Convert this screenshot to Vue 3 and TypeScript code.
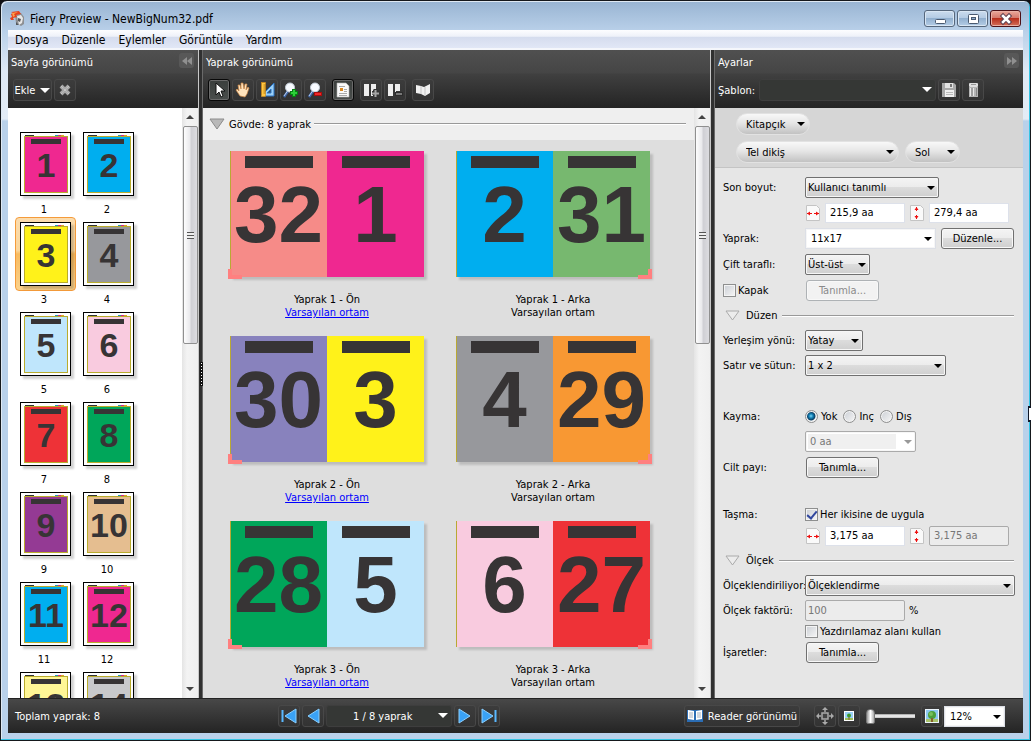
<script setup lang="ts">
import { ref } from 'vue'

interface Page { n: number; color: string }
interface Side { title: string; link: boolean; left: Page; right: Page }

const magenta = '#ef2890'
const cyan = '#00aeef'
const yellow = '#fff21a'
const gray = '#97989c'
const sky = '#bfe6fc'
const pink = '#f9cbdf'
const red = '#ee3237'
const green = '#00a65a'

const menus = ['Dosya', 'Düzenle', 'Eylemler', 'Görüntüle', 'Yardım']
const pages: Page[] = [
  magenta, cyan, yellow, gray, sky, pink, red, green,
  '#943a94', '#e5be90', cyan, magenta, '#fff696', '#c8c9cb',
].map((color, i) => ({ n: i + 1, color }))
const selected = ref(3)

const sides: Side[] = [
  { title: 'Yaprak 1 - Ön', link: true, left: { n: 32, color: '#f68b88' }, right: { n: 1, color: magenta } },
  { title: 'Yaprak 1 - Arka', link: false, left: { n: 2, color: cyan }, right: { n: 31, color: '#77b86f' } },
  { title: 'Yaprak 2 - Ön', link: true, left: { n: 30, color: '#8882bd' }, right: { n: 3, color: yellow } },
  { title: 'Yaprak 2 - Arka', link: false, left: { n: 4, color: gray }, right: { n: 29, color: '#f89833' } },
  { title: 'Yaprak 3 - Ön', link: true, left: { n: 28, color: green }, right: { n: 5, color: sky } },
  { title: 'Yaprak 3 - Arka', link: false, left: { n: 6, color: pink }, right: { n: 27, color: red } },
]

const creepModes = ['Yok', 'Inç', 'Dış']
const width = ref('215,9 aa')
const height = ref('279,4 aa')
const bleedX = ref('3,175 aa')
const bleedY = ref('3,175 aa')
const factor = ref('100')
const cover = ref(false)
const bleedBoth = ref(true)
const unprintable = ref(false)
const creep = ref('Yok')
const zoom = ref(0)
</script>

<template>
  <div class="window">
    <header class="titlebar">
      <svg class="app-icon" viewBox="0 0 16 16" width="16" height="16">
        <path d="M5 4l6-2 3 4 0 7-3 2-5-3z" fill="#8d8f92" />
        <path d="M7 5l4-1 2 3-1 5-3 2z" fill="#e8e8e8" />
        <path d="M8 7l3 1-1 3-2-1zM6 11l3 3-3 0z" fill="#55585c" />
        <path d="M1 1l8-1 2 3-5 1 1 2-4 1 1 2-3 0-1-2 2-1-1-3 2-1z" fill="#e5401c" />
        <path d="M2 2l6-1-4 2 1 2-2 1z" fill="#ffa04a" />
      </svg>
      <h1>Fiery Preview - NewBigNum32.pdf</h1>
      <div class="caption-buttons">
        <button type="button" aria-label="Simge durumuna küçült">
          <svg viewBox="0 0 30 16" width="30" height="16"><rect x="10.500" y="8.500" width="10" height="4" rx="1" fill="#fff" stroke="#4a5a70" /></svg>
        </button>
        <button type="button" aria-label="Ekranı kapla">
          <svg viewBox="0 0 30 16" width="30" height="16"><rect x="10.500" y="3.500" width="10" height="9" rx="1" fill="#fff" stroke="#4a5a70" /><rect x="13.500" y="6.500" width="4" height="2" fill="#8fabc8" stroke="#4a5a70" /></svg>
        </button>
        <button type="button" class="close" aria-label="Kapat">
          <svg viewBox="0 0 30 16" width="30" height="16"><path d="M12 5l6 6M18 5l-6 6" stroke="#5c4050" stroke-width="4.500" stroke-linecap="square" /><path d="M12 5l6 6M18 5l-6 6" stroke="#fff" stroke-width="2.500" stroke-linecap="square" /></svg>
        </button>
      </div>
    </header>

    <nav class="menubar">
      <button v-for="m in menus" :key="m" type="button">{{ m }}</button>
    </nav>

    <main class="panels">
      <section class="panel pages-panel">
        <div class="dark">
          <div class="head"><h2>Sayfa görünümü</h2>
            <button type="button" class="fold" aria-label="Daralt"><svg viewBox="0 0 10 8" width="10" height="8"><path d="M5 0v8L0 4zM10 0v8L5 4z" fill="#909090" /></svg></button>
          </div>
          <div class="tools">
            <button type="button" class="tool add">Ekle <i class="tri" /></button>
            <button type="button" class="tool" aria-label="Sil"><svg viewBox="0 0 16 16" width="16" height="16"><path d="M4 4l8 8M12 4l-8 8" stroke="#a8a8a8" stroke-width="4" /><path d="M4 4l8 8M12 4l-8 8" stroke="#d4d4d4" stroke-width="1" stroke-dasharray="1 1" /></svg></button>
          </div>
        </div>
        <div class="scroller">
          <div class="thumbs">
            <button v-for="p in pages" :key="p.n" type="button" class="cell" @click="selected = p.n">
              <span class="halo" :class="{ on: p.n === selected }">
                <span class="card">
                  <span class="marks" />
                  <span class="art" :style="{ background: p.color }"><b>{{ p.n }}</b></span>
                </span>
              </span>
              <span class="num">{{ p.n }}</span>
            </button>
          </div>
          <div class="scrollbar"><i class="up" /><span class="knob"><i /></span><i class="down" /></div>
        </div>
      </section>

      <div class="splitter"><i class="grip" /></div>

      <section class="panel sheets-panel">
        <div class="dark">
          <div class="head"><h2>Yaprak görünümü</h2></div>
          <div class="tools">
            <button type="button" class="tool pressed" aria-label="Seç"><svg viewBox="0 0 16 16" width="16" height="16"><path d="M5 1v12l3-3 2 5 2-1-2-5h4z" fill="#fff" stroke="#111" stroke-width="1" /></svg></button>
            <button type="button" class="tool" aria-label="El"><svg viewBox="0 0 16 16" width="16" height="16"><path d="M5 14L1 8l1-1 2 2L3 3l2 0 1 4 0-6 2 0 1 6 1-5 2 0-1 6 2-3 1 1-2 6-2 3z" fill="#ffe3bd" stroke="#c98443" stroke-width=".7" /></svg></button>
            <button type="button" class="tool" aria-label="Ölç"><svg viewBox="0 0 16 16" width="16" height="16"><path d="M15 1v13H2z" fill="#9bd0f7" stroke="#2a75c6" /><path d="M12 7v4H8z" fill="#3b474d" stroke="#2a75c6" /><rect x="2.500" y=".5" width="4" height="14" fill="#ffc641" stroke="#d48a12" stroke-width=".6" /><path d="M4.500 3h2M4.500 5h2M4.500 7h2M4.500 9h2M4.500 11h2" stroke="#8e5c0c" stroke-width=".7" /></svg></button>
            <button type="button" class="tool" aria-label="Yakınlaştır"><svg viewBox="0 0 16 16" width="16" height="16"><path d="M5 9l-4 6" stroke="#3f68ab" stroke-width="2.500" /><path d="M4.500 9l-3.500 5" stroke="#dfe9f8" stroke-width=".8" /><circle cx="7" cy="5.500" r="4.500" fill="#f7faff" stroke="#c3cdd8" /><path d="M11 7v8M7 11h8" stroke="#087f13" stroke-width="4" /><path d="M11 8v6M8 11h6" stroke="#2ccf39" stroke-width="2" /></svg></button>
            <button type="button" class="tool" aria-label="Uzaklaştır"><svg viewBox="0 0 16 16" width="16" height="16"><path d="M6 9l-4 6" stroke="#3f68ab" stroke-width="2.500" /><path d="M5.500 9l-3.500 5" stroke="#dfe9f8" stroke-width=".8" /><circle cx="8" cy="5.500" r="4.500" fill="#f7faff" stroke="#c3cdd8" /><rect x="7.500" y="10.500" width="7" height="3" fill="#ef2828" stroke="#a80d0d" /></svg></button>
            <button type="button" class="tool pressed spaced" aria-label="Sayfa içeriği"><svg viewBox="0 0 16 16" width="16" height="16"><path d="M2 1h9l3 3v11H2z" fill="#fafafa" stroke="#b5b5b5" stroke-width=".6" /><path d="M4 4.500h6M9 7.500h3M9 9.500h3M4 11.500h8M4 13.500h8" stroke="#aaa" /><rect x="5" y="6" width="3" height="3" fill="#d98820" /></svg></button>
            <button type="button" class="tool spaced" aria-label="Yaprak ekle"><svg viewBox="0 0 16 16" width="16" height="16"><path d="M1 2h5v12H1zM8 2h5v6h-3v6H8z" fill="#ededed" /><path d="M12.500 7v8M9 11h7" stroke="#333" stroke-width="4" /><path d="M12.500 8v7M9 11.500h7" stroke="#a5a5a5" stroke-width="2" /></svg></button>
            <button type="button" class="tool" aria-label="Yaprak çıkar"><svg viewBox="0 0 16 16" width="16" height="16"><path d="M1 2h5v12H1zM8 2h5v7H9v5H8z" fill="#ededed" /><rect x="8.500" y="10.500" width="7" height="3" fill="#777" stroke="#2b2b2b" /></svg></button>
            <button type="button" class="tool spaced" aria-label="Kitap"><svg viewBox="0 0 16 16" width="16" height="16"><path d="M1 3l5 1 3 1 6-3v9l-5 3-4-2-5-1z" fill="#f0f0f0" /><path d="M6 4v8M10 5v8" stroke="#c4c4c4" /></svg></button>
          </div>
        </div>
        <div class="scroller">
          <div class="sheets">
            <div class="group-head"><svg viewBox="0 0 16 12" width="16" height="12"><path d="M1 1h14L8 11z" fill="#b9b9b9" stroke="#8c8c8c" /></svg><h3>Gövde: 8 yaprak</h3><hr></div>
            <div class="spreads">
              <figure v-for="s in sides" :key="s.title">
                <div class="spread" :class="s.link ? 'front' : 'back'">
                  <div v-for="p in [s.left, s.right]" :key="p.n" class="leaf" :style="{ background: p.color }"><b>{{ p.n }}</b></div>
                </div>
                <figcaption>{{ s.title }}<br><a v-if="s.link" href="#">Varsayılan ortam</a><template v-else>Varsayılan ortam</template></figcaption>
              </figure>
            </div>
          </div>
          <div class="scrollbar"><i class="up" /><span class="knob"><i /></span><i class="down" /></div>
        </div>
      </section>

      <div class="splitter" />

      <section class="panel settings-panel">
        <div class="dark">
          <div class="head"><h2>Ayarlar</h2>
            <button type="button" class="fold" aria-label="Daralt"><svg viewBox="0 0 10 8" width="10" height="8"><path d="M0 0v8l5-4zM5 0v8l5-4z" fill="#909090" /></svg></button>
          </div>
          <div class="tools">
            <label class="preset" for="preset">Şablon:</label>
            <span class="pick dim"><select id="preset"><option /></select></span>
            <button type="button" class="tool" aria-label="Kaydet"><svg viewBox="0 0 16 16" width="16" height="16"><path d="M1 1h12l2 2v12H1z" fill="#a9a9a9" /><path d="M4 1h8v5H4z" fill="#e4e4e4" /><path d="M9 2h2v3H9z" fill="#777" /><path d="M4 8h9v7H4z" fill="#f0f0f0" /><path d="M5 10.500h7M5 12.500h7" stroke="#bbb" /></svg></button>
            <button type="button" class="tool" aria-label="Şablonu sil"><svg viewBox="0 0 16 16" width="16" height="16"><path d="M4 5h9v10H4z" fill="#b5b5b5" /><path d="M5.500 6v8M8.500 6v8" stroke="#e8e8e8" /><path d="M7 6v8M11.500 6v8" stroke="#888" /><rect x="4" y="1" width="9" height="4" rx="1" fill="#dedede" /><path d="M6 2h5v1H6z" fill="#999" /></svg></button>
          </div>
        </div>
        <div class="mode">
          <div class="pills"><span class="pill w-book"><select aria-label="İş türü"><option>Kitapçık</option></select></span></div>
          <div class="pills">
            <span class="pill w-bind"><select aria-label="Ciltleme"><option>Tel dikiş</option></select></span>
            <span class="pill w-edge"><select aria-label="Kenar"><option>Sol</option></select></span>
          </div>
        </div>
        <form class="form" @submit.prevent>
          <div class="row"><label for="size">Son boyut:</label><span class="pick w-size"><select id="size"><option>Kullanıcı tanımlı</option></select></span></div>
          <div class="row"><span />
            <div class="dims">
              <svg viewBox="0 0 14 16" width="14" height="16"><path d="M.5.500h10l3 3v12H.500z" fill="#fafafa" stroke="#c4c4c4" /><path d="M1 8.500h5M8 8.500h5" stroke="#e11" /><path d="M1 8.500l3-2v4zM13 8.500l-3-2v4z" fill="#e11" /></svg>
              <input v-model="width" aria-label="Genişlik">
              <svg viewBox="0 0 14 16" width="14" height="16"><path d="M.5.500h10l3 3v12H.500z" fill="#fafafa" stroke="#c4c4c4" /><path d="M6.500 2v4M6.500 10v4" stroke="#e11" /><path d="M6.500 2l-2 3h4zM6.500 14l-2-3h4z" fill="#e11" /></svg>
              <input v-model="height" aria-label="Yükseklik">
            </div>
          </div>
          <div class="row loose"><label for="sheet">Yaprak:</label><span class="pick flat w-sheet"><select id="sheet"><option>11x17</option></select></span><button type="button" class="btn">Düzenle...</button></div>
          <div class="row loose"><label for="duplex">Çift taraflı:</label><span class="pick w-duplex"><select id="duplex"><option>Üst-üst</option></select></span></div>
          <div class="row loose"><label class="check"><input v-model="cover" type="checkbox">Kapak</label><button type="button" class="btn" disabled>Tanımla...</button></div>
          <div class="divider"><svg viewBox="0 0 16 12" width="16" height="12"><path d="M1 1h13L7.500 10z" fill="#ececec" stroke="#aaa" /></svg><h3>Düzen</h3><hr></div>
          <div class="row"><label for="orient">Yerleşim yönü:</label><span class="pick w-orient"><select id="orient"><option>Yatay</option></select></span></div>
          <div class="row"><label for="grid">Satır ve sütun:</label><span class="pick w-grid"><select id="grid"><option>1 x 2</option></select></span></div>
          <div class="row far"><span>Kayma:</span>
            <div class="radios"><label v-for="c in creepModes" :key="c"><input v-model="creep" type="radio" name="creep" :value="c">{{ c }}</label></div>
          </div>
          <div class="row"><span /><span class="pick off w-creep"><select aria-label="Kayma miktarı" disabled><option>0 aa</option></select></span></div>
          <div class="row loose"><span>Cilt payı:</span><button type="button" class="btn">Tanımla...</button></div>
          <div class="row apart"><span>Taşma:</span><label class="check"><input v-model="bleedBoth" type="checkbox">Her ikisine de uygula</label></div>
          <div class="row tight"><span />
            <div class="dims">
              <svg viewBox="0 0 14 16" width="14" height="16"><path d="M.5.500h10l3 3v12H.500z" fill="#fafafa" stroke="#c4c4c4" /><path d="M1 8.500h5M8 8.500h5" stroke="#e11" /><path d="M1 8.500l3-2v4zM13 8.500l-3-2v4z" fill="#e11" /></svg>
              <input v-model="bleedX" aria-label="Yatay taşma">
              <svg viewBox="0 0 14 16" width="14" height="16"><path d="M.5.500h10l3 3v12H.500z" fill="#fafafa" stroke="#c4c4c4" /><path d="M6.500 2v4M6.500 10v4" stroke="#e11" /><path d="M6.500 2l-2 3h4zM6.500 14l-2-3h4z" fill="#e11" /></svg>
              <input v-model="bleedY" aria-label="Dikey taşma" disabled>
            </div>
          </div>
          <div class="divider"><svg viewBox="0 0 16 12" width="16" height="12"><path d="M1 1h13L7.500 10z" fill="#ececec" stroke="#aaa" /></svg><h3>Ölçek</h3><hr></div>
          <div class="row"><label for="scale">Ölçeklendiriliyor:</label><span class="pick w-scale"><select id="scale"><option>Ölçeklendirme</option></select></span></div>
          <div class="row"><label for="factor">Ölçek faktörü:</label><input id="factor" v-model="factor" class="factor" disabled><span class="unit">%</span></div>
          <div class="row tight"><span /><label class="check"><input v-model="unprintable" type="checkbox">Yazdırılamaz alanı kullan</label></div>
          <div class="row tight"><span>İşaretler:</span><button type="button" class="btn">Tanımla...</button></div>
        </form>
      </section>
    </main>

    <footer class="status">
      <span class="total">Toplam yaprak: 8</span>
      <div class="pager">
        <button type="button" class="tool" aria-label="İlk"><svg viewBox="0 0 16 16" width="16" height="16"><path d="M1.500 2v12" stroke="#5ab8ff" stroke-width="2" /><path d="M15 1v14L4 8z" fill="#3aa2f6" stroke="#8bd0ff" /></svg></button>
        <button type="button" class="tool" aria-label="Önceki"><svg viewBox="0 0 16 16" width="16" height="16"><path d="M14 1v14L3 8z" fill="#3aa2f6" stroke="#8bd0ff" /></svg></button>
        <span class="pick dim current"><select aria-label="Yaprak"><option>1 / 8 yaprak</option></select></span>
        <button type="button" class="tool" aria-label="Sonraki"><svg viewBox="0 0 16 16" width="16" height="16"><path d="M2 1v14l11-7z" fill="#3aa2f6" stroke="#8bd0ff" /></svg></button>
        <button type="button" class="tool" aria-label="Son"><svg viewBox="0 0 16 16" width="16" height="16"><path d="M14.500 2v12" stroke="#5ab8ff" stroke-width="2" /><path d="M1 1v14l11-7z" fill="#3aa2f6" stroke="#8bd0ff" /></svg></button>
      </div>
      <button type="button" class="tool reader"><svg viewBox="0 0 16 14" width="16" height="14"><path d="M0 1h16v12H0z" fill="#2b6db4" /><path d="M1 1l6 1v9l-6-1zM9 2l6-1v9l-6 1z" fill="#fff" /><path d="M2 4h4M2 6h4M2 8h4M10 4h4M10 6h4M10 8h4" stroke="#8a9aac" stroke-width=".8" /></svg>Reader görünümü</button>
      <div class="zoomer">
        <button type="button" class="tool" aria-label="Sığdır"><svg viewBox="0 0 18 18" width="18" height="18"><rect x="6" y="6" width="6" height="6" fill="#444" stroke="#aaa" stroke-width="1.500" /><path d="M9 5V2M9 13v3M5 9H2M13 9h3" stroke="#aaa" stroke-width="1.500" /><path d="M9 0l3 3H6zM9 18l3-3H6zM0 9l3-3v6zM18 9l-3-3v6z" fill="#aaa" /></svg></button>
        <button type="button" class="tool" aria-label="Uzaklaştır"><svg viewBox="0 0 10 10" width="10" height="10"><rect width="10" height="10" fill="#fff" /><rect x="1" y="1" width="8" height="8" fill="#9ad0f4" /><path d="M1 7h8v2H1z" fill="#9dbf5c" /><circle cx="5" cy="4.500" r="2" fill="#3d9a2c" /><path d="M5 6v3" stroke="#86602a" /></svg></button>
        <input v-model="zoom" type="range" min="0" max="100" aria-label="Yakınlaştırma">
        <button type="button" class="tool" aria-label="Yakınlaştır"><svg viewBox="0 0 14 14" width="14" height="14"><rect width="14" height="14" fill="#eaf4fb" /><rect x="1" y="1" width="12" height="12" fill="#8cc8f0" /><path d="M1 10h12v3H1z" fill="#a9c36a" /><circle cx="7" cy="6" r="4" fill="#4ca03a" /><circle cx="6" cy="5" r="2" fill="#78c05c" /><path d="M7 9v4" stroke="#86602a" stroke-width="2" /></svg></button>
        <span class="pick flat w-zoom"><select aria-label="Yakınlaştırma oranı"><option>12%</option></select></span>
      </div>
    </footer>
    <svg class="pointer" viewBox="0 0 3 18" width="3" height="18"><path d="M3 0H0v16h3z" fill="#101828" /><path d="M3 2H1v12h2z" fill="#fff" /></svg>
  </div>
</template>

<style>
html, body, #app { height: 100%; }
body { margin: 0; background: #101014; overflow: hidden; }
</style>

<style scoped>
* { box-sizing: border-box; }
.window {
  position: relative;
  height: 100%;
  display: flex;
  flex-direction: column;
  padding: 1px 7px 7px;
  border: 1px solid #15181c;
  border-radius: 7px 7px 0 0;
  background: linear-gradient(#98b4d2, #b9d0e9 30px, #dfe9f5 70px, #e3ecf6 118px, #b9d1ea 120px);
  box-shadow: inset -1px -1px 0 #35c4e4, inset 1px 1px 0 #dfe9f3;
  font: 11px/13px "DejaVu Sans Condensed", "DejaVu Sans", sans-serif;
  color: #000;
}
button, input, select { font: inherit; color: inherit; margin: 0; }
button { padding: 0; border: 0; background: none; }
h1, h2, h3 { margin: 0; font: inherit; }
svg { display: block; flex: none; }

.titlebar { flex: none; display: flex; align-items: center; gap: 4px; height: 28px; padding: 5px 0 0 2px; }
.titlebar h1 { flex: 1; font-size: 12px; line-height: 16px; }
.caption-buttons { display: flex; gap: 2px; padding-right: 2px; }
.caption-buttons button {
  width: 31px; height: 17px; display: grid; place-items: center;
  border: 1px solid #56677c; border-radius: 3px;
  background: linear-gradient(#cbdcee, #b3cae3 48%, #92b0cf 50%, #b4cde6);
  box-shadow: inset 0 0 0 1px #d9e6f3;
}
.caption-buttons .close { border-color: #4c1016; background: linear-gradient(#eba89b, #d4776a 48%, #b82f1d 50%, #d4705a); box-shadow: inset 0 0 0 1px #e9b0a5; }
.menubar {
  flex: none; display: flex; height: 20px; padding-left: 7px; gap: 13px;
  background: linear-gradient(#fdfdff, #eef1f9 35%, #d5dcee 40%, #e1e7f6);
  border-bottom: 2px solid #f4f6fb;
}
.menubar button { font-size: 12px; line-height: 18px; padding-top: 1px; }

.panels { flex: 1; min-height: 0; display: grid; grid-template-columns: 190px 5px minmax(0, 1fr) 5px 308px; grid-template-rows: minmax(0, 1fr); }
.panel { display: flex; flex-direction: column; min-width: 0; min-height: 0; overflow: hidden; }
.splitter { display: flex; align-items: center; justify-content: flex-end; background: linear-gradient(90deg, #c8c8c8 1px, #303030 1px, #303030 4px, #6a6a6a 4px); }
.grip { width: 3px; height: 24px; background: radial-gradient(#fff 1px, #111 1px) 0 0 / 3px 3px; }

.dark { flex: none; height: 58px; background: linear-gradient(#505050, #454545 23px, #404040 24px, #242424); color: #fff; }
.head { display: flex; align-items: center; justify-content: space-between; height: 23px; padding: 1px 4px 0 3px; }
.fold { width: 15px; height: 15px; display: grid; place-items: center; border-radius: 3px; background: #585858; margin-bottom: 3px; }
.tools { display: flex; align-items: center; gap: 2px; height: 34px; padding: 0 5px; }
.tool {
  flex: none; width: 22px; height: 22px; display: flex; align-items: center; justify-content: center; gap: 5px;
  border: 1px solid #484848; border-radius: 3px; background: linear-gradient(#3c3c3c, #333);
}
.tool.pressed { border-color: #080808; background: linear-gradient(#3a3e3c, #4a4e4c); box-shadow: inset 0 0 0 1px #6a6a6a; }
.tool.spaced { margin-left: 4px; }
.tool.add { width: 39px; }
.tri { border: 5px solid transparent; border-top-color: #fff; border-bottom-width: 0; }

.scroller { flex: 1; min-height: 0; display: flex; }
.scrollbar {
  flex: none; width: 16px; display: flex; flex-direction: column; align-items: center;
  background: linear-gradient(90deg, #e4e4e4, #f3f3f3 5px, #efefef);
}
.scrollbar .up, .scrollbar .down { border: 4px solid transparent; }
.scrollbar .up { border-top-width: 0; border-bottom-color: #444; margin: 7px 0; }
.scrollbar .down { border-bottom-width: 0; border-top-color: #444; margin: auto 0 7px; }
.knob { width: 15px; height: 37%; display: grid; place-items: center; border: 1px solid #8f8f8f; border-radius: 2px; background: linear-gradient(90deg, #fdfdfd, #e9e9ec 45%, #cfcfd4 55%, #dcdce0); }
.knob i { width: 7px; height: 7px; background: repeating-linear-gradient(#555 0 1px, #eee 1px 3px); }

.pages-panel .scroller { background: #fff; }
.thumbs { flex: 1; min-height: 0; overflow: hidden; display: grid; grid-template-columns: 61px 61px; grid-auto-rows: 90px; column-gap: 2px; align-content: start; padding: 19px 0 0 7px; }
.cell { display: block; text-align: center; }
.halo { display: block; height: 74px; padding: 4px; border: 1px solid transparent; border-radius: 4px; }
.halo.on { border-color: #f59b3a; background: linear-gradient(#fbdcae, #fbd69b 45%, #f8bb60 50%, #fbd28c); }
.card { position: relative; display: block; width: 51px; height: 64px; padding: 3px 2px 2px 3px; border: 1px solid #000; background: #fff; box-shadow: 3px 3px 2px rgba(0, 0, 0, .18); }
.marks { position: absolute; inset: 2px 3px auto; height: 1px; background: linear-gradient(90deg, #fff 1px, #333 1px 10px, #fff 10px 31px, #29b 31px 34px, #d28 34px 37px, #da2 37px 40px, #fff 40px); }
.art { display: flex; justify-content: center; align-items: center; position: relative; height: 57px; border: 1px solid #b9ac2c; overflow: hidden; }
.art::before { content: ""; position: absolute; left: 6px; right: 6px; top: 2px; height: 5px; background: #373435; }
.art b, .leaf b { font-family: "Liberation Sans", Arial, sans-serif; font-weight: bold; color: #373435; }
.art b { font-size: 34px; line-height: 56px; }
.num { display: block; line-height: 18px; padding-right: 3px; }

.sheets { flex: 1; min-width: 0; overflow: hidden; background: #dedede; }
.group-head { display: flex; align-items: center; height: 32px; padding: 0 8px 0 6px; background: #efefef; }
.group-head h3 { margin-left: 4px; }
hr { flex: 1; height: 2px; margin: 0 0 0 3px; border: 0; background: linear-gradient(#999 1px, #fff 1px); }
.spreads { display: grid; grid-template-columns: 194px 194px; gap: 17px 32px; padding: 11px 27px; }
figure { margin: 0; text-align: center; }
.spread { position: relative; display: flex; height: 126px; box-shadow: 3px 3px 2px rgba(0, 0, 0, .15); }
.spread::before { content: ""; position: absolute; z-index: 1; left: 0; top: 0; bottom: 0; width: 1px; background: #b9a934; }
.spread::after { content: ""; position: absolute; z-index: 1; width: 10px; height: 6px; bottom: -2px; border: 0 solid #ff8080; }
.front::after { left: -2px; border-left-width: 4px; border-bottom-width: 4px; }
.back::after { right: -2px; border-right-width: 4px; border-bottom-width: 4px; }
.leaf { position: relative; flex: 1; display: grid; place-items: center; }
.leaf::before { content: ""; position: absolute; left: 15px; right: 14px; top: 5px; height: 12px; background: #373435; }
.leaf b { font-size: 80px; line-height: 128px; }
figcaption { margin-top: 14px; }
.leaf { height: 126px; }
figcaption { margin-top: 16px; }
a { color: #00f; }

.settings-panel { background: #e6e6e6; }
.preset { width: 39px; margin-left: -1px; }
.settings-panel .tools { padding: 0 39px 0 4px; }
.mode { flex: none; display: grid; gap: 6px; height: 60px; padding: 5px 21px; background: #d6d6d6; border-bottom: 1px solid #c4c4c4; }
.pills { display: flex; gap: 6px; }
.pick, .pill { position: relative; flex: none; display: block; height: 21px; }
.pick select, .pill select {
  appearance: none; display: block; width: 100%; height: 100%; padding: 0 12px 0 2px; outline: 0; opacity: 1;
  border: 1px solid #707070; border-radius: 2px; background: linear-gradient(#f4f4f4, #ececec 48%, #dcdcdc 50%, #cfcfcf); color: #000;
  box-shadow: inset 0 0 0 1px #f6f6f6;
}
.pick::after, .pill::after { content: ""; position: absolute; right: 4px; top: 9px; border: 4px solid transparent; border-top-color: #000; border-bottom-width: 0; pointer-events: none; }
.pill { height: 22px; }
.pill::after { right: 5px; }
.pill select { padding-left: 9px; border-color: #e2e2e2; border-radius: 11px; background: linear-gradient(#f8f8f8, #e6e6e6 45%, #c2c2c2); box-shadow: none; }
.pick.flat select { padding-left: 5px; border-color: #dcdfe6; background: #fff; border-radius: 0; }
.pick.dim select { border-color: #3e3e3e; border-radius: 3px; background: #353735; color: #fff; box-shadow: none; }
.pick.dim::after { top: 8px; border-width: 5px 5px 0; border-top-color: #fff; }
.settings-panel .pick.dim { flex: 1; height: 22px; }
.pick.off select { padding-left: 4px; background: linear-gradient(#f0f0f0, #f0f0f0) 2px 2px / 88px 15px no-repeat #fff; border-color: #aaa; color: #777; }
.pick.off::after { border-top-color: #999; }
.w-book { width: 74px; } .w-bind { width: 163px; } .w-edge { width: 55px; }
.w-size { width: 134px; } .w-sheet { width: 131px; } .w-duplex { width: 65px; } .w-orient { width: 58px; }
.w-grid { width: 141px; } .w-creep { width: 111px; } .w-scale { width: 210px; } .w-zoom { width: 61px; }

.form { flex: 1; min-height: 0; overflow: hidden; padding: 5px 8px; }
.row { display: flex; align-items: center; height: 21px; margin-top: 4px; white-space: nowrap; }
.row > :first-child { flex: none; width: 82px; }
.row.loose { margin-top: 5px; }
.row.tight { margin-top: 0; }
.row.apart { margin-top: 26px; }
.row.far { margin-top: 30px; }
.row .btn { width: 73px; height: 21px; margin-left: 1px; border: 1px solid #707070; border-radius: 3px; background: linear-gradient(#f4f4f4, #ececec 48%, #dcdcdc 50%, #cfcfcf); box-shadow: inset 0 0 0 1px #f8f8f8; }
.row .flat + .btn { margin-left: 5px; }
.row .btn:disabled { color: #8a8a8a; border-color: #aeb2b5; background: #f2f2f2; }
.dims { display: flex; align-items: center; gap: 5px; margin-left: 1px; }
.dims input { width: 80px; height: 20px; }
.dims input, .factor { padding: 0 4px; border: 1px solid #dde1ea; background: #fff; outline: 0; }
.dims input:disabled, .factor:disabled { border-color: #aaa; border-radius: 2px; background: #ececec; color: #777; }
.factor { width: 100px; height: 21px; padding-left: 2px; }
.unit { margin-left: 4px; }
.check, .radios label { display: flex; align-items: center; gap: 2px; }
.radios { display: flex; gap: 6px; }
input[type="checkbox"], input[type="radio"] { appearance: none; flex: none; width: 13px; height: 13px; border: 1px solid #8e8f8f; background: linear-gradient(135deg, #cbcfd5, #f6f6f6); box-shadow: inset 0 0 0 1px #f4f4f4; }
input[type="checkbox"] { display: grid; place-items: center; }
input[type="checkbox"]:checked::after { content: ""; width: 4px; height: 8px; margin-bottom: 2px; border: solid #31479e; border-width: 0 2px 2px 0; rotate: 40deg; }
input[type="radio"] { border-radius: 50%; }
input[type="radio"]:checked { background: radial-gradient(circle at 5px 5px, #7fd6f5, #1483b8 2px, #0c3c60 4px, #f4f4f4 5px); }
.radios label { gap: 3px; }
.divider { display: flex; align-items: center; height: 21px; margin: 4px 1px 0 2px; }
.divider h3 { margin-left: 5px; }
.divider hr { margin-left: 5px; }

.status { flex: none; display: flex; align-items: center; height: 35px; padding: 0 18px 0 7px; color: #fff; background: linear-gradient(#484848, #242424); border-top: 1px solid #222; }
.total { width: 263px; }
.pager { display: flex; gap: 2px; }
.current { width: 126px; height: 22px; }
.current select { padding-left: 26px; }
.reader { width: 116px; margin-left: auto; }
.zoomer { display: flex; align-items: center; gap: 2px; margin-left: 14px; }
.zoomer input { appearance: none; width: 49px; height: 16px; margin: 0 4px; background: linear-gradient(#999, #fff 2px, #ccc 3px) 0 6px / 100% 4px no-repeat; }
.zoomer input::-webkit-slider-thumb { appearance: none; width: 9px; height: 15px; border: 1px solid #777; border-radius: 4px 4px 2px 2px; background: linear-gradient(90deg, #999, #fff 50%, #aaa); }
.zoomer .flat { margin-left: -1px; color: #000; }
.pointer { position: absolute; right: -1px; top: 405px; }
</style>
